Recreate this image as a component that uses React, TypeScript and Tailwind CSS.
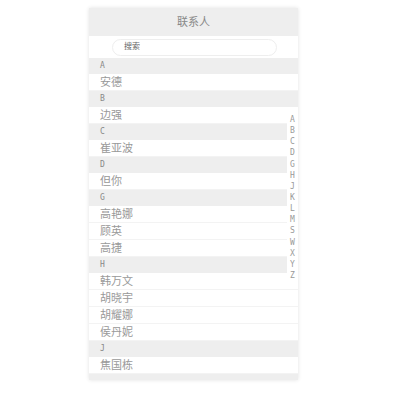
const groups: { letter: string; names: string[] }[] = [
  { letter: "A", names: ["安德"] },
  { letter: "B", names: ["边强"] },
  { letter: "C", names: ["崔亚波"] },
  { letter: "D", names: ["但你"] },
  { letter: "G", names: ["高艳娜", "顾英", "高捷"] },
  { letter: "H", names: ["韩万文", "胡晓宇", "胡耀娜", "侯丹妮"] },
  { letter: "J", names: ["焦国栋"] },
];

const index = ["A", "B", "C", "D", "G", "H", "J", "K", "L", "M", "S", "W", "X", "Y", "Z"];

export default function App() {
  return (
    <div className="w-[400px] h-[400px] bg-white pt-[8px] pl-[89px] font-['Liberation_Sans','Noto_Sans_CJK_SC',sans-serif]">
      <div className="relative w-[209px] h-[372px] overflow-hidden bg-white shadow-[0_0_4px_rgba(0,0,0,0.12)]">
        <div className="h-[28px] bg-[#eeeeee] flex items-center justify-center text-[11px] text-[#888]">
          联系人
        </div>
        <div className="h-[22px] flex items-center pl-[23px]">
          <div className="w-[165px] h-[17px] rounded-full border border-[#eeeeee] flex items-center pl-[11px] text-[8px] text-[#666]">
            搜索
          </div>
        </div>
        <div>
          {groups.map((g) => (
            <div key={g.letter}>
              <div className="h-[16px] bg-[#eeeeee] flex items-center pl-[11px] text-[8px] text-[#888] font-['DejaVu_Sans_Mono',monospace]">
                {g.letter}
              </div>
              {g.names.map((n) => (
                <div
                  key={n}
                  className="h-[17px] border-b border-[#f3f3f3] flex items-center pl-[11px] text-[11px] text-[#999]"
                >
                  {n}
                </div>
              ))}
            </div>
          ))}
          <div className="h-[16px] bg-[#eeeeee]" />
        </div>
        <div className="absolute right-0 top-[104px] w-[11px] h-[172px] bg-white flex flex-col items-center justify-between py-[3px] text-[8px] leading-[10px] text-[#999] font-['DejaVu_Sans_Mono',monospace]">
          {index.map((l) => (
            <span key={l}>{l}</span>
          ))}
        </div>
      </div>
    </div>
  );
}
